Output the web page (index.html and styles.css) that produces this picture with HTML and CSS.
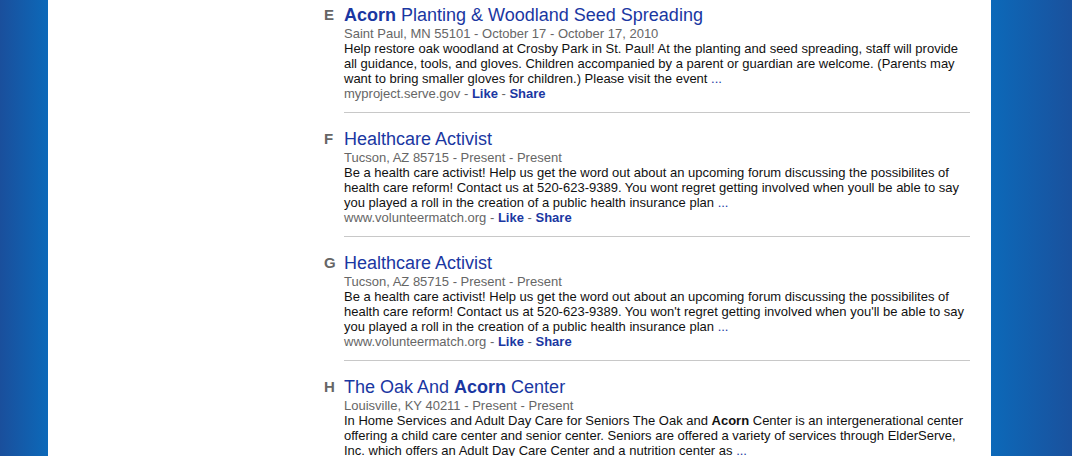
FILE: index.html
```html
<!DOCTYPE html>
<html>
<head>
<meta charset="utf-8">
<link rel="stylesheet" href="styles.css">
</head>
<body>
<div class="page">
  <div class="side side-left"></div>
  <main class="main">
    <ol class="results">
      <li class="result">
        <span class="letter">E</span>
        <div class="body">
          <a class="title" href="#"><b>Acorn</b> Planting &amp; Woodland Seed Spreading</a>
          <div class="meta">Saint Paul, MN 55101 - October 17 - October 17, 2010</div>
          <p class="desc">Help restore oak woodland at Crosby Park in St. Paul! At the planting and seed spreading, staff will provide all guidance, tools, and gloves. Children accompanied by a parent or guardian are welcome. (Parents may want to bring smaller gloves for children.) Please visit the event <a class="more" href="#">...</a></p>
          <div class="meta">myproject.serve.gov - <a class="act" href="#">Like</a> - <a class="act" href="#">Share</a></div>
        </div>
      </li>
      <li class="result">
        <span class="letter">F</span>
        <div class="body">
          <a class="title" href="#">Healthcare Activist</a>
          <div class="meta">Tucson, AZ 85715 - Present - Present</div>
          <p class="desc">Be a health care activist! Help us get the word out about an upcoming forum discussing the possibilites of health care reform! Contact us at 520-623-9389. You wont regret getting involved when youll be able to say you played a roll in the creation of a public health insurance plan <a class="more" href="#">...</a></p>
          <div class="meta">www.volunteermatch.org - <a class="act" href="#">Like</a> - <a class="act" href="#">Share</a></div>
        </div>
      </li>
      <li class="result">
        <span class="letter">G</span>
        <div class="body">
          <a class="title" href="#">Healthcare Activist</a>
          <div class="meta">Tucson, AZ 85715 - Present - Present</div>
          <p class="desc">Be a health care activist! Help us get the word out about an upcoming forum discussing the possibilites of health care reform! Contact us at 520-623-9389. You won't regret getting involved when you'll be able to say you played a roll in the creation of a public health insurance plan <a class="more" href="#">...</a></p>
          <div class="meta">www.volunteermatch.org - <a class="act" href="#">Like</a> - <a class="act" href="#">Share</a></div>
        </div>
      </li>
      <li class="result">
        <span class="letter">H</span>
        <div class="body">
          <a class="title" href="#">The Oak And <b>Acorn</b> Center</a>
          <div class="meta">Louisville, KY 40211 - Present - Present</div>
          <p class="desc">In Home Services and Adult Day Care for Seniors The Oak and <b>Acorn</b> Center is an intergenerational center offering a child care center and senior center. Seniors are offered a variety of services through ElderServe, Inc. which offers an Adult Day Care Center and a nutrition center as <a class="more" href="#">...</a></p>
          <div class="meta">www.volunteermatch.org - <a class="act" href="#">Like</a> - <a class="act" href="#">Share</a></div>
        </div>
      </li>
    </ol>
  </main>
  <div class="side side-right"></div>
</div>
</body>
</html>
```
FILE: styles.css
```css
html, body {
  margin: 0;
  padding: 0;
  height: 456px;
  overflow: hidden;
  background: #fff;
}

body {
  font-family: "Liberation Sans", Arial, Helvetica, sans-serif;
  color: #000;
}

.page {
  display: flex;
  height: 456px;
}

.side {
  flex: none;
}

.side-left {
  width: 48px;
  background: linear-gradient(to right, #1a4f9c, #0c69b9);
}

.side-right {
  width: 81px;
  background: linear-gradient(to right, #0c69b9, #1a519d);
}

.main {
  flex: 1;
  background: #fff;
  overflow: hidden;
}

.results {
  list-style: none;
  margin: -11px 0 0 274px;
  padding: 0;
  width: 648px;
}

.result {
  display: flex;
  padding-top: 16px;
}

.result .body {
  flex: 1;
  padding-bottom: 11px;
  border-bottom: 1px solid #c8c8c8;
}

.letter {
  flex: none;
  width: 20px;
  padding-left: 2px;
  font-size: 15px;
  font-weight: bold;
  line-height: 20px;
  color: #666;
}

.title {
  display: block;
  font-size: 18px;
  line-height: 21px;
  color: #1a37a2;
  text-decoration: none;
}

.meta {
  font-size: 13px;
  line-height: 15px;
  color: #666;
}

.desc {
  margin: 0;
  font-size: 13px;
  line-height: 15px;
  color: #111;
}

.more {
  color: #1a37a2;
  text-decoration: none;
}

.act {
  color: #1a37a2;
  font-weight: bold;
  text-decoration: none;
}
```
